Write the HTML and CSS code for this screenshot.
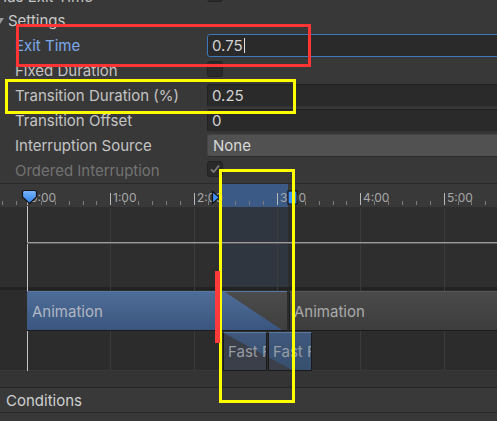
FILE: index.html
```html
<!DOCTYPE html>
<html>
<head>
<meta charset="utf-8">
<link rel="stylesheet" href="styles.css">
</head>
<body>
<div class="panel">
  <div class="row"><span class="label top-label">Has Exit Time</span><span class="check"></span></div>
  <div class="row"><span class="foldout"></span><span class="section">Settings</span></div>
  <div class="row"><span class="label active">Exit Time</span><div class="field focus">0.75<span class="caret"></span></div></div>
  <div class="row"><span class="label">Fixed Duration</span><span class="check"></span></div>
  <div class="row"><span class="label">Transition Duration (%)</span><div class="field">0.25</div></div>
  <div class="row"><span class="label">Transition Offset</span><div class="field">0</div></div>
  <div class="row"><span class="label">Interruption Source</span><div class="field dropdown">None</div></div>
  <div class="row"><span class="label disabled">Ordered Interruption</span><span class="check checked"><svg width="12" height="12" viewBox="0 0 12 12"><path d="M2 6.5 L4.8 9 L10 2.5" fill="none" stroke="#7d7d7d" stroke-width="1.8"/></svg></span></div>
</div>

<div class="timeline">
  <div class="ruler">
    <div class="ruler-hl"></div>
    <div class="minor-ticks"></div>
    <span class="major" style="left:110px"></span><span class="tlabel" style="left:113px">1:00</span>
    <span class="major" style="left:194px"></span><span class="tlabel" style="left:197px">2:00</span>
    <span class="major" style="left:277px"></span><span class="tlabel" style="left:280px">3:00</span>
    <span class="major" style="left:360px"></span><span class="tlabel" style="left:363px">4:00</span>
    <span class="major" style="left:444px"></span><span class="tlabel" style="left:447px">5:00</span>
    <span class="major" style="left:27px"></span><span class="tlabel" style="left:30px">0:00</span>
    <svg class="mk mk-start" width="17" height="16" viewBox="0 0 17 16"><defs><linearGradient id="g1" x1="0" y1="0" x2="0" y2="1"><stop offset="0" stop-color="#7ab6ff"/><stop offset="1" stop-color="#2f7fe6"/></linearGradient></defs><path d="M1.5 3.5 Q1.5 1.5 3.5 1.5 H13.5 Q15.5 1.5 15.5 3.5 V8 L8.5 14.5 L1.5 8 Z" fill="url(#g1)" stroke="#151515" stroke-width="1.2"/></svg>
    <svg class="mk mk-tri" width="10" height="15" viewBox="0 0 10 15"><path d="M1.5 1.5 L8.5 7.5 L1.5 13.5 Z" fill="#3f8ff2" stroke="#151515" stroke-width="1.2"/></svg>
    <svg class="mk mk-end" width="11" height="15" viewBox="0 0 11 15"><rect x="1" y="1" width="9" height="13" fill="#3f8ff2" stroke="#151515" stroke-width="1.2"/><rect x="5" y="2" width="1.4" height="11" fill="#e8f2ff"/></svg>
  </div>
  <div class="curve">
    <div class="curve-hl"></div>
  </div>
  <div class="sep"></div>
  <div class="track"></div>
  <div class="track"></div>

  <span class="grid" style="left:110px"></span>
  <span class="grid" style="left:194px"></span>
  <span class="grid" style="left:277px"></span>
  <span class="grid" style="left:360px"></span>
  <span class="grid" style="left:444px"></span>
  <span class="playhead"></span>
  <span class="hline"></span>

  <div class="bar bar-a"><span class="bar-text">Animation</span><div class="bar-a-tri"></div></div>
  <div class="bar bar-b"><span class="bar-text">Animation</span></div>
  <div class="box box-1"><div class="box-gray"></div><span class="box-text">Fast F</span></div>
  <div class="box box-2"><div class="box-gray"></div><span class="box-text">Fast F</span></div>
</div>

<div class="gap"></div>
<div class="header">Conditions</div>
<div class="rest"></div>

<div class="anno red-box"></div>
<div class="anno yellow-1"></div>
<div class="anno yellow-2"></div>
<div class="anno red-bar"></div>
</body>
</html>
```
FILE: styles.css
```css
html, body {
  margin: 0;
  padding: 0;
}
body {
  width: 497px;
  height: 421px;
  overflow: hidden;
  background: #383838;
  font-family: Inter, "Noto Sans", sans-serif;
  font-size: 15px;
  position: relative;
}

.panel {
  margin-top: -17px;
}
.row {
  height: 25px;
  display: flex;
  align-items: center;
}
.label {
  flex: 0 0 207px;
  box-sizing: border-box;
  padding-left: 15px;
  color: #c4c4c4;
  white-space: nowrap;
}
.top-label {
  padding-left: 0;
  text-indent: -4px;
  margin-top: 2px;
}
.label.active {
  color: #7ca9ec;
}
.label.disabled {
  color: #737373;
}
.foldout {
  width: 0;
  height: 0;
  margin-left: -4px;
  border-left: 4px solid transparent;
  border-right: 4px solid transparent;
  border-top: 6px solid #9a9a9a;
}
.section {
  margin-left: 4px;
  color: #c8c8c8;
}
.field {
  flex: 1;
  height: 23px;
  margin-right: -10px;
  box-sizing: border-box;
  background: #2a2a2a;
  border: 1px solid #212121;
  border-bottom-color: #333333;
  border-radius: 3px;
  padding-left: 4px;
  color: #d2d2d2;
  display: flex;
  align-items: center;
}
.field.focus {
  border: 1px solid #3a79bb;
}
.caret {
  width: 1px;
  height: 15px;
  margin-left: 1px;
  background: #e0e0e0;
}
.dropdown {
  background: #515151;
  border: 1px solid #444444;
  border-bottom-color: #2c2c2c;
  color: #dadada;
  padding-left: 5px;
}
.check {
  width: 16px;
  height: 16px;
  box-sizing: border-box;
  background: #2a2a2a;
  border: 1px solid #222222;
  border-radius: 3px;
  margin-top: -3px;
  display: flex;
  align-items: center;
  justify-content: center;
}

/* timeline */
.timeline {
  position: relative;
  height: 188px;
  display: flex;
  flex-direction: column;
  overflow: hidden;
}
.ruler {
  position: relative;
  flex: 0 0 23px;
  border-top: 1px solid #2a2a2a;
  background: #393939;
}
.ruler-hl {
  position: absolute;
  left: 222px;
  width: 66px;
  top: 0;
  bottom: 0;
  background: #3c5a86;
}
.minor-ticks {
  position: absolute;
  left: 0;
  right: 0;
  top: 17px;
  height: 4px;
  background: repeating-linear-gradient(to right, #7c7c7c 0 1px, transparent 1px 13.889px);
  background-position: 27px 0;
}
.major {
  position: absolute;
  top: 9px;
  width: 1px;
  height: 12px;
  background: #b8b8b8;
}
.tlabel {
  position: absolute;
  top: 7px;
  font-size: 12px;
  line-height: 14px;
  color: #a8a8a8;
}
.mk {
  position: absolute;
  display: block;
}
.mk-start {
  left: 21px;
  top: 5px;
}
.mk-tri {
  left: 211px;
  top: 6px;
}
.mk-end {
  left: 287px;
  top: 6px;
}
.curve {
  position: relative;
  flex: 0 0 80px;
  background: #2e2e2e;
}
.curve-hl {
  position: absolute;
  left: 222px;
  width: 66px;
  top: 0;
  bottom: 0;
  background: #30363f;
}
.sep {
  flex: 0 0 3px;
  background: #222222;
}
.track {
  flex: 0 0 40px;
  background: #2c2c2c;
}
.grid {
  position: absolute;
  top: 25px;
  bottom: 0;
  width: 1px;
  background: #3b3b3b;
}
.playhead {
  position: absolute;
  left: 27px;
  top: 23px;
  bottom: 0;
  width: 1px;
  background: #c6c6c6;
}
.hline {
  position: absolute;
  left: 27px;
  right: 0;
  top: 59px;
  height: 1px;
  background: #9c9c9c;
  box-shadow: 0 1px 0 #5a5a5a;
}
.bar {
  position: absolute;
  top: 108px;
  height: 40px;
  box-sizing: border-box;
  overflow: hidden;
  display: flex;
  align-items: center;
}
.bar-a {
  left: 27px;
  width: 260px;
  background: linear-gradient(#4e6d96, #3a5680);
  border-top: 1px solid #5878a2;
  border-bottom: 1px solid #1c1c1c;
}
.bar-a-tri {
  position: absolute;
  left: 198px;
  width: 62px;
  top: 0;
  bottom: 0;
  background: linear-gradient(#4b4b4b, #3f3f3f);
  clip-path: polygon(0 0, 100% 0, 100% 100%, 92% 100%);
}
.bar-b {
  left: 289px;
  width: 220px;
  background: linear-gradient(#4a4a4a, #3d3d3d);
  border-top: 1px solid #565656;
  border-left: 1px solid #1c1c1c;
  border-bottom: 1px solid #1c1c1c;
}
.bar-text {
  position: relative;
  padding-left: 5px;
  color: #b0b7c2;
  white-space: nowrap;
}
.bar-b .bar-text {
  padding-left: 4px;
  color: #ababab;
}
.box {
  position: absolute;
  top: 149px;
  height: 39px;
  width: 44px;
  box-sizing: border-box;
  overflow: hidden;
  background: linear-gradient(#3f587c, #37506f);
  border: 1px solid #1a1a1a;
  border-top-color: #5a7aa3;
  display: flex;
  align-items: center;
}
.box-1 {
  left: 223px;
}
.box-2 {
  left: 268px;
}
.box-gray {
  position: absolute;
  inset: 0;
  background: #3a3f49;
}
.box-1 .box-gray {
  clip-path: polygon(0 0, 100% 63%, 100% 100%, 0 100%);
}
.box-2 .box-gray {
  clip-path: polygon(0 66%, 55% 100%, 0 100%);
}
.box-text {
  position: relative;
  padding-left: 4px;
  color: #979ca5;
  white-space: nowrap;
}

.gap {
  height: 16px;
  background: #343434;
}
.header {
  height: 24px;
  border-top: 1px solid #262626;
  border-bottom: 1px solid #2a2a2a;
  background: #393939;
  color: #d0d0d0;
  padding-left: 6px;
  display: flex;
  align-items: center;
}
.rest {
  height: 20px;
  background: #383838;
}

/* annotations */
.anno {
  position: absolute;
  box-sizing: border-box;
}
.red-box {
  left: 16px;
  top: 24px;
  width: 295px;
  height: 43px;
  border: 3px solid #ff3535;
}
.yellow-1 {
  left: 5px;
  top: 79px;
  width: 291px;
  height: 35px;
  border: 3px solid #ffff00;
}
.yellow-2 {
  left: 219px;
  top: 169px;
  width: 76px;
  height: 234px;
  border: 3px solid #ffff00;
}
.red-bar {
  left: 215px;
  top: 271px;
  width: 5px;
  height: 72px;
  background: #ff3a3a;
}
```
